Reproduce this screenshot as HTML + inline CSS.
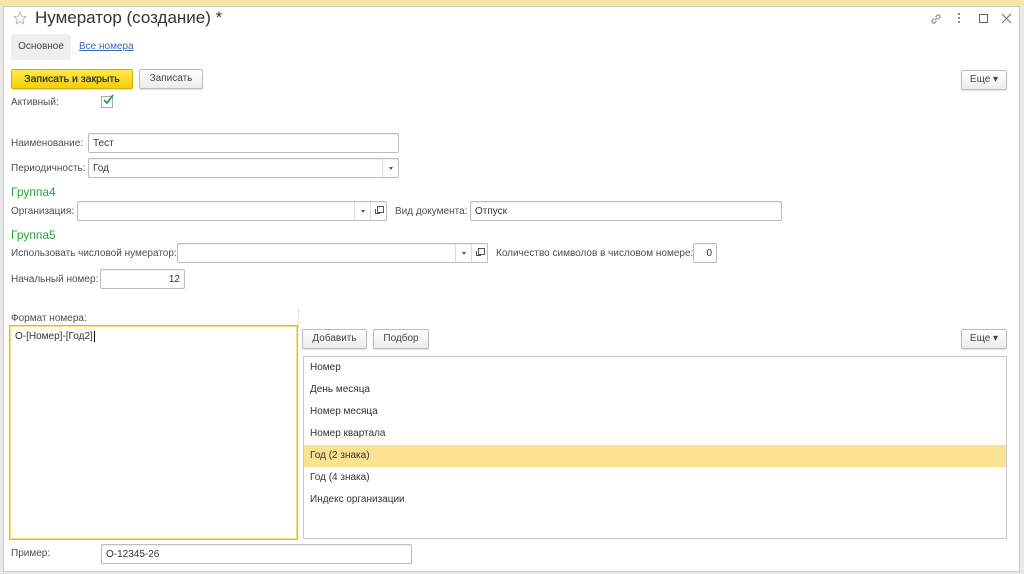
<!DOCTYPE html>
<html><head><meta charset="utf-8">
<style>
*{box-sizing:border-box;margin:0;padding:0}
body{width:1024px;height:574px;overflow:hidden;background:#e8e8e8;font-family:"Liberation Sans",sans-serif;font-size:10px;color:#4d4d4d;position:relative}
.a{position:absolute;white-space:nowrap}
.win{position:absolute;left:3px;top:6px;width:1017px;height:566px;background:#fff;border:1px solid #ccc}
.inp{position:absolute;height:20px;border:1px solid #bcbcbc;border-radius:2px;background:#fff;padding:0 4px;line-height:19px;color:#333;box-shadow:inset 0 1px 1px #eee}
.btn{position:absolute;height:20px;border:1px solid #bdbdbd;border-radius:2px;background:linear-gradient(#fff,#ececec);text-align:center;line-height:18px;color:#444;box-shadow:0 1px 1px #ddd}
.dd{position:absolute;top:0;width:16px;height:18px;border-left:1px solid #ddd}
.dd:after{content:"";position:absolute;left:6px;top:8px;border:2px solid transparent;border-top:3px solid #555}
.op{position:absolute;top:0;width:16px;height:18px;border-left:1px solid #ddd}
.op:before{content:"";position:absolute;left:6px;top:4px;width:5px;height:5px;border:1px solid #555}
.op:after{content:"";position:absolute;left:4px;top:7px;width:4px;height:4px;border-left:1px solid #555;border-bottom:1px solid #555}
.grp{position:absolute;color:#2aa33b;font-size:12px}
.row{position:absolute;left:0;width:702px;height:22px;line-height:22px;padding-left:6px;color:#333}
</style></head><body>
<div class="a" style="left:0;top:0;width:1024px;height:6px;background:#f3e9a6"></div>
<div class="win"></div>
<svg class="a" style="left:13px;top:11px" width="14" height="14" viewBox="0 0 14 14"><path d="M7 1 L8.8 5.2 L13 5.5 L9.8 8.4 L10.8 12.8 L7 10.5 L3.2 12.8 L4.2 8.4 L1 5.5 L5.2 5.2 Z" fill="none" stroke="#bbb" stroke-width="1"/></svg>
<div class="a" style="left:35px;top:8px;font-size:17px;color:#333">Нумератор (создание) *</div>
<svg class="a" style="left:929px;top:12px" width="14" height="14" viewBox="0 0 14 14"><g fill="none" stroke="#999" stroke-width="1.3"><path d="M6 8 L8 6"/><path d="M5 6.5 L3 8.5 A2 2 0 0 0 5.5 11 L7.5 9"/><path d="M9 7.5 L11 5.5 A2 2 0 0 0 8.5 3 L6.5 5"/></g></svg>
<div class="a" style="left:958px;top:13px;width:2px;height:2px;background:#888;box-shadow:0 4px 0 #888,0 8px 0 #888"></div>
<div class="a" style="left:979px;top:14px;width:9px;height:9px;border:1px solid #666"></div>
<svg class="a" style="left:1001px;top:13px" width="11" height="11" viewBox="0 0 11 11"><path d="M1 1 L10 10 M10 1 L1 10" stroke="#777" stroke-width="1.2"/></svg>
<div class="a" style="left:11px;top:34px;width:60px;height:26px;background:#efefef;border-radius:3px;line-height:26px;text-align:center;color:#444">Основное</div>
<div class="a" style="left:79px;top:41px;color:#3a66c4;text-decoration:underline">Все номера</div>
<div class="btn" style="left:11px;top:69px;width:122px;background:linear-gradient(#ffe94a,#f3cf0c);border-color:#d4b300;color:#333;font-size:10.5px;-webkit-text-stroke:0.25px #333">Записать и закрыть</div>
<div class="btn" style="left:139px;top:69px;width:64px">Записать</div>
<div class="btn" style="left:961px;top:70px;width:46px">Еще ▾</div>
<div class="a" style="left:11px;top:97px">Активный:</div>
<div class="a" style="left:101px;top:96px;width:12px;height:12px;border:1px solid #aaa;background:#fff"></div>
<svg class="a" style="left:102px;top:94px" width="12" height="12" viewBox="0 0 12 12"><path d="M2 6 L5 9 L11 1" fill="none" stroke="#1fa33f" stroke-width="1.8"/></svg>
<div class="a" style="left:11px;top:138px">Наименование:</div>
<div class="inp" style="left:88px;top:133px;width:311px">Тест</div>
<div class="a" style="left:11px;top:163px">Периодичность:</div>
<div class="inp" style="left:88px;top:158px;width:311px">Год<div class="dd" style="right:0"></div></div>
<div class="grp" style="left:11px;top:185px">Группа4</div>
<div class="a" style="left:11px;top:206px">Организация:</div>
<div class="inp" style="left:77px;top:201px;width:310px"><div class="dd" style="right:16px"></div><div class="op" style="right:0"></div></div>
<div class="a" style="left:395px;top:206px">Вид документа:</div>
<div class="inp" style="left:470px;top:201px;width:312px">Отпуск</div>
<div class="grp" style="left:11px;top:228px">Группа5</div>
<div class="a" style="left:11px;top:248px">Использовать числовой нумератор:</div>
<div class="inp" style="left:177px;top:243px;width:311px"><div class="dd" style="right:16px"></div><div class="op" style="right:0"></div></div>
<div class="a" style="left:496px;top:248px">Количество символов в числовом номере:</div>
<div class="inp" style="left:693px;top:243px;width:24px;text-align:right">0</div>
<div class="a" style="left:11px;top:274px">Начальный номер:</div>
<div class="inp" style="left:100px;top:269px;width:85px;text-align:right">12</div>
<div class="a" style="left:11px;top:313px">Формат номера:</div>
<div class="a" style="left:298px;top:310px;height:18px;border-left:1px dotted #ccc"></div>
<div class="a" style="left:9px;top:325px;width:289px;height:215px;border:1px solid #f0b800;box-shadow:inset 0 0 0 1px #fbe07a;padding:5px 5px;color:#333">О-[Номер]-[Год2]<span style="border-left:1px solid #000;margin-left:1px"></span></div>
<div class="btn" style="left:302px;top:329px;width:65px">Добавить</div>
<div class="btn" style="left:373px;top:329px;width:56px">Подбор</div>
<div class="btn" style="left:961px;top:329px;width:46px">Еще ▾</div>
<div class="a" style="left:303px;top:356px;width:704px;height:183px;border:1px solid #c8c8c8">
<div class="row" style="top:0">Номер</div>
<div class="row" style="top:22px">День месяца</div>
<div class="row" style="top:44px">Номер месяца</div>
<div class="row" style="top:66px">Номер квартала</div>
<div class="row" style="top:88px;background:#fbe290">Год (2 знака)</div>
<div class="row" style="top:110px">Год (4 знака)</div>
<div class="row" style="top:132px">Индекс организации</div>
</div>
<div class="a" style="left:11px;top:548px">Пример:</div>
<div class="inp" style="left:101px;top:544px;width:311px">О-12345-26</div>
</body></html>
